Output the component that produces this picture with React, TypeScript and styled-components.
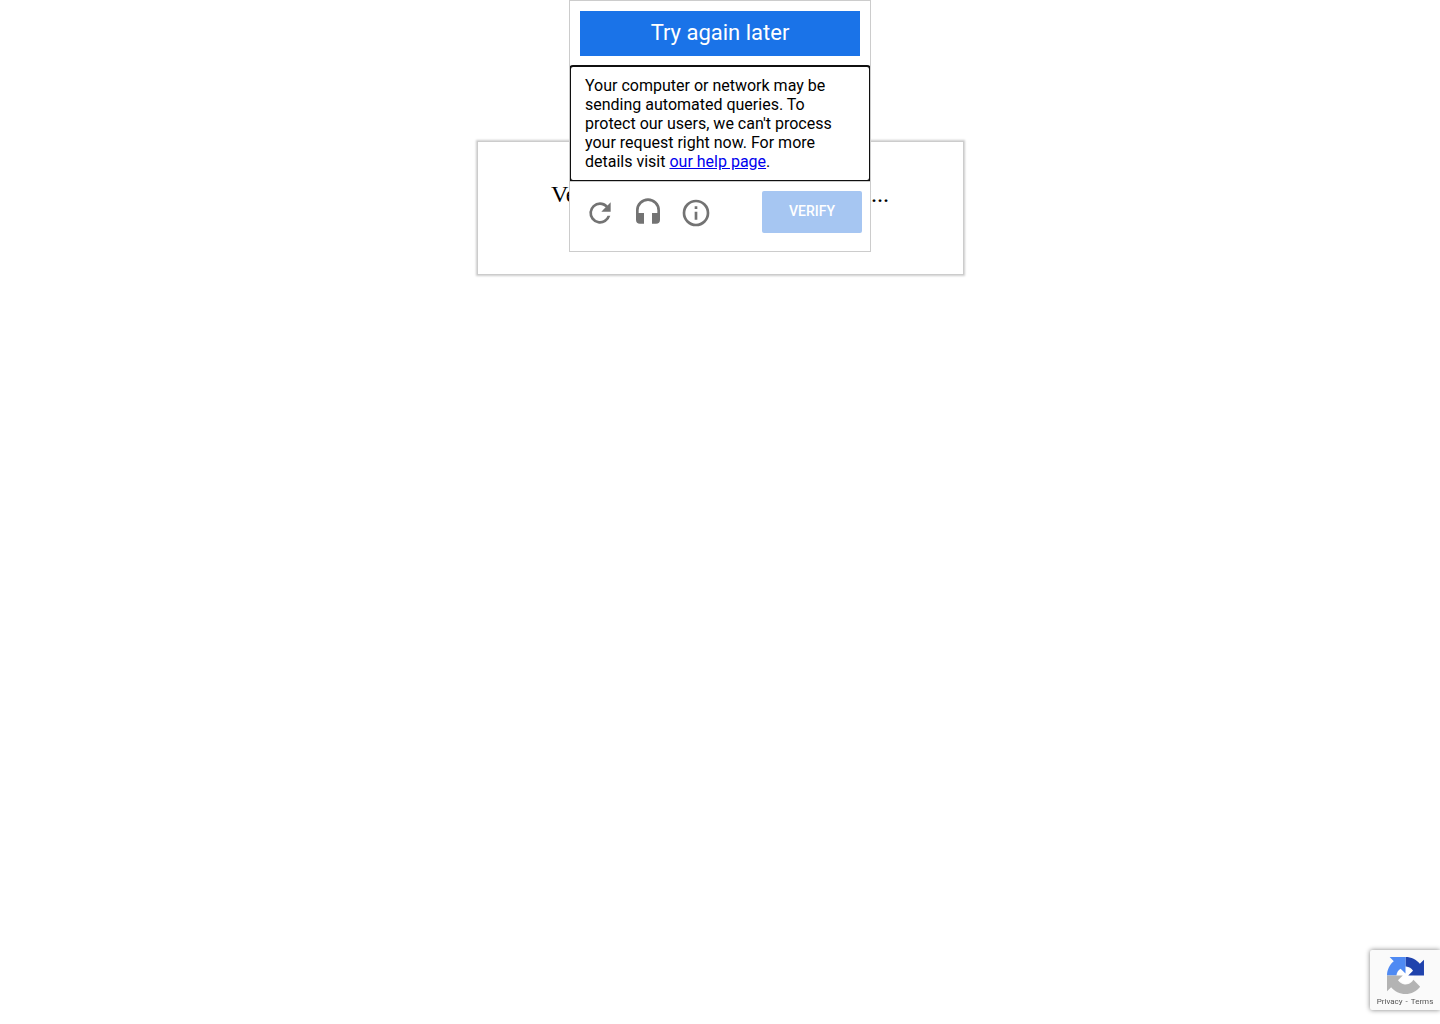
import React from 'react';
import styled, { createGlobalStyle } from 'styled-components';

const GlobalStyle = createGlobalStyle`
  body {
    margin: 0;
    background: #fff;
    color: #000;
    font-family: "Liberation Serif", "Times New Roman", serif;
  }
`;

const Page = styled.main`
  display: flex;
  justify-content: center;
  padding: 141px 16px 40px;
`;

const StatusCard = styled.section`
  box-sizing: border-box;
  width: 100%;
  max-width: 487px;
  padding: 36px 24px 64px;
  border: 1px solid #ccc;
  box-shadow: 0 0 2px 1px #ccc;
  text-align: center;
`;

const StatusText = styled.p`
  margin: 0;
  font-size: 24px;
  line-height: 32px;
`;

const Overlay = styled.div`
  position: absolute;
  top: 0;
  left: 0;
  right: 0;
  display: flex;
  justify-content: center;
`;

const Challenge = styled.div`
  width: 300px;
  border: 1px solid #ccc;
  background: #fff;
  font-family: Roboto, "Liberation Sans", sans-serif;
`;

const Heading = styled.h1`
  margin: 10px;
  padding: 6px 0 7px;
  background: #1a73e8;
  color: #fff;
  font-size: 22px;
  font-weight: 400;
  line-height: 32px;
  text-align: center;
`;

const MessageClip = styled.div`
  overflow-x: clip;
`;

const Message = styled.div`
  padding: 10px 15px;
  border-radius: 3px;
  outline: 2px solid #101010;
  outline-offset: -1px;
  font-size: 16px;
  line-height: 19px;
`;

const HelpLink = styled.a`
  color: #00e;
`;

const Footer = styled.div`
  position: relative;
  display: flex;
  align-items: flex-start;
  justify-content: space-between;
  height: 60px;
  padding: 9px 8px 0 6px;
  border-top: 1px solid #ccc;
  background: #fff;
`;

const Controls = styled.div`
  display: flex;
`;

const IconButton = styled.button`
  display: flex;
  align-items: center;
  justify-content: center;
  width: 48px;
  height: 44px;
  padding: 0;
  border: 0;
  background: transparent;
  color: #737373;
  cursor: pointer;
`;

const VerifyButton = styled.button`
  width: 100px;
  height: 42px;
  padding: 0 0 2px;
  border: 0;
  border-radius: 2px;
  background: #a6c6f2;
  color: #fff;
  font-family: inherit;
  font-size: 14px;
  font-weight: 500;
`;

const Badge = styled.aside`
  position: fixed;
  right: 0;
  bottom: 14px;
  box-sizing: border-box;
  display: flex;
  flex-direction: column;
  align-items: center;
  gap: 2px;
  width: 70px;
  height: 60px;
  padding-top: 7px;
  border-radius: 2px 0 0 2px;
  background: #fafafa;
  box-shadow: 0 0 5px gray;
  color: #555;
  font-family: Roboto, "Liberation Sans", sans-serif;
`;

const BadgeLinks = styled.nav`
  display: flex;
  gap: 3px;
  font-size: 8px;
  line-height: 12px;
`;

const BadgeLink = styled.a`
  color: inherit;
  text-decoration: none;
`;

const ReloadIcon = () => (
  <svg width="32" height="32" viewBox="0 0 24 24" fill="currentColor" aria-hidden="true">
    <path d="M17.65 6.35A7.96 7.96 0 0 0 12 4a8 8 0 1 0 7.73 10h-2.08A6 6 0 1 1 12 6c1.66 0 3.14.69 4.22 1.78L13 11h7V4z" />
  </svg>
);

const HeadphonesIcon = () => (
  <svg width="32" height="32" viewBox="0 0 24 24" fill="currentColor" aria-hidden="true">
    <path d="M12 1a9 9 0 0 0-9 9v7a3 3 0 0 0 3 3h3v-8H5v-2a7 7 0 0 1 14 0v2h-4v8h3a3 3 0 0 0 3-3v-7a9 9 0 0 0-9-9z" />
  </svg>
);

const InfoIcon = () => (
  <svg width="32" height="32" viewBox="0 0 24 24" fill="currentColor" aria-hidden="true">
    <path d="M11 17h2v-6h-2v6zm1-15a10 10 0 1 0 0 20 10 10 0 0 0 0-20zm0 18a8 8 0 1 1 0-16 8 8 0 0 1 0 16zM11 9h2V7h-2v2z" />
  </svg>
);

const RecaptchaLogo = () => (
  <svg width="37" height="37" viewBox="0 0 64 64" role="img" aria-label="reCAPTCHA">
    <path fill="#fff" d="M17 32a15 15 0 0 1 15-15l9 6 6 9-3 9-12 6-11-6z" />
    <path fill="#2043ad" d="M32 .1C42 .1 50.948 4.674 56.807 11.847l7.16-7.16V32H36.7l8.3-8.3c-2.5-4-6.9-6.8-11.9-7.2l-1.1-.1z" />
    <path fill="#4f8af3" d="M32 .1H4.594l7.16 7.16C4.58 13.147 0 22.06 0 32h16.3c.4-5 3.1-9.3 7.2-11.8l8.5 8.3z" />
    <path fill="#b3b3b3" d="M0 32v27.313l7.16-7.16c5.86 7.173 14.774 11.754 24.76 11.754 10.4 0 19.622-4.96 25.458-12.64l-11.736-11.86a15.55 15.55 0 0 1-4.754 5.334c-2.05 1.6-4.952 2.906-8.968 2.906-.485 0-.86-.057-1.135-.163-4.976-.393-9.288-3.14-11.828-7.124L27.3 32z" />
  </svg>
);

export default function App() {
  return (
    <>
      <GlobalStyle />
      <Page>
        <StatusCard>
          <StatusText>Verifying that you are not a robot...</StatusText>
        </StatusCard>
      </Page>
      <Overlay>
        <Challenge role="dialog" aria-labelledby="challenge-title">
          <Heading id="challenge-title">Try again later</Heading>
          <MessageClip>
            <Message>
              Your computer or network may be sending automated queries. To protect our users, we
              can't process your request right now. For more details visit{' '}
              <HelpLink href="#help">our help page</HelpLink>.
            </Message>
          </MessageClip>
          <Footer>
            <Controls>
              <IconButton type="button" aria-label="Get a new challenge"><ReloadIcon /></IconButton>
              <IconButton type="button" aria-label="Get an audio challenge"><HeadphonesIcon /></IconButton>
              <IconButton type="button" aria-label="Help"><InfoIcon /></IconButton>
            </Controls>
            <VerifyButton type="button" disabled>VERIFY</VerifyButton>
          </Footer>
        </Challenge>
      </Overlay>
      <Badge>
        <RecaptchaLogo />
        <BadgeLinks>
          <BadgeLink href="#privacy">Privacy</BadgeLink>
          <span aria-hidden="true">-</span>
          <BadgeLink href="#terms">Terms</BadgeLink>
        </BadgeLinks>
      </Badge>
    </>
  );
}
